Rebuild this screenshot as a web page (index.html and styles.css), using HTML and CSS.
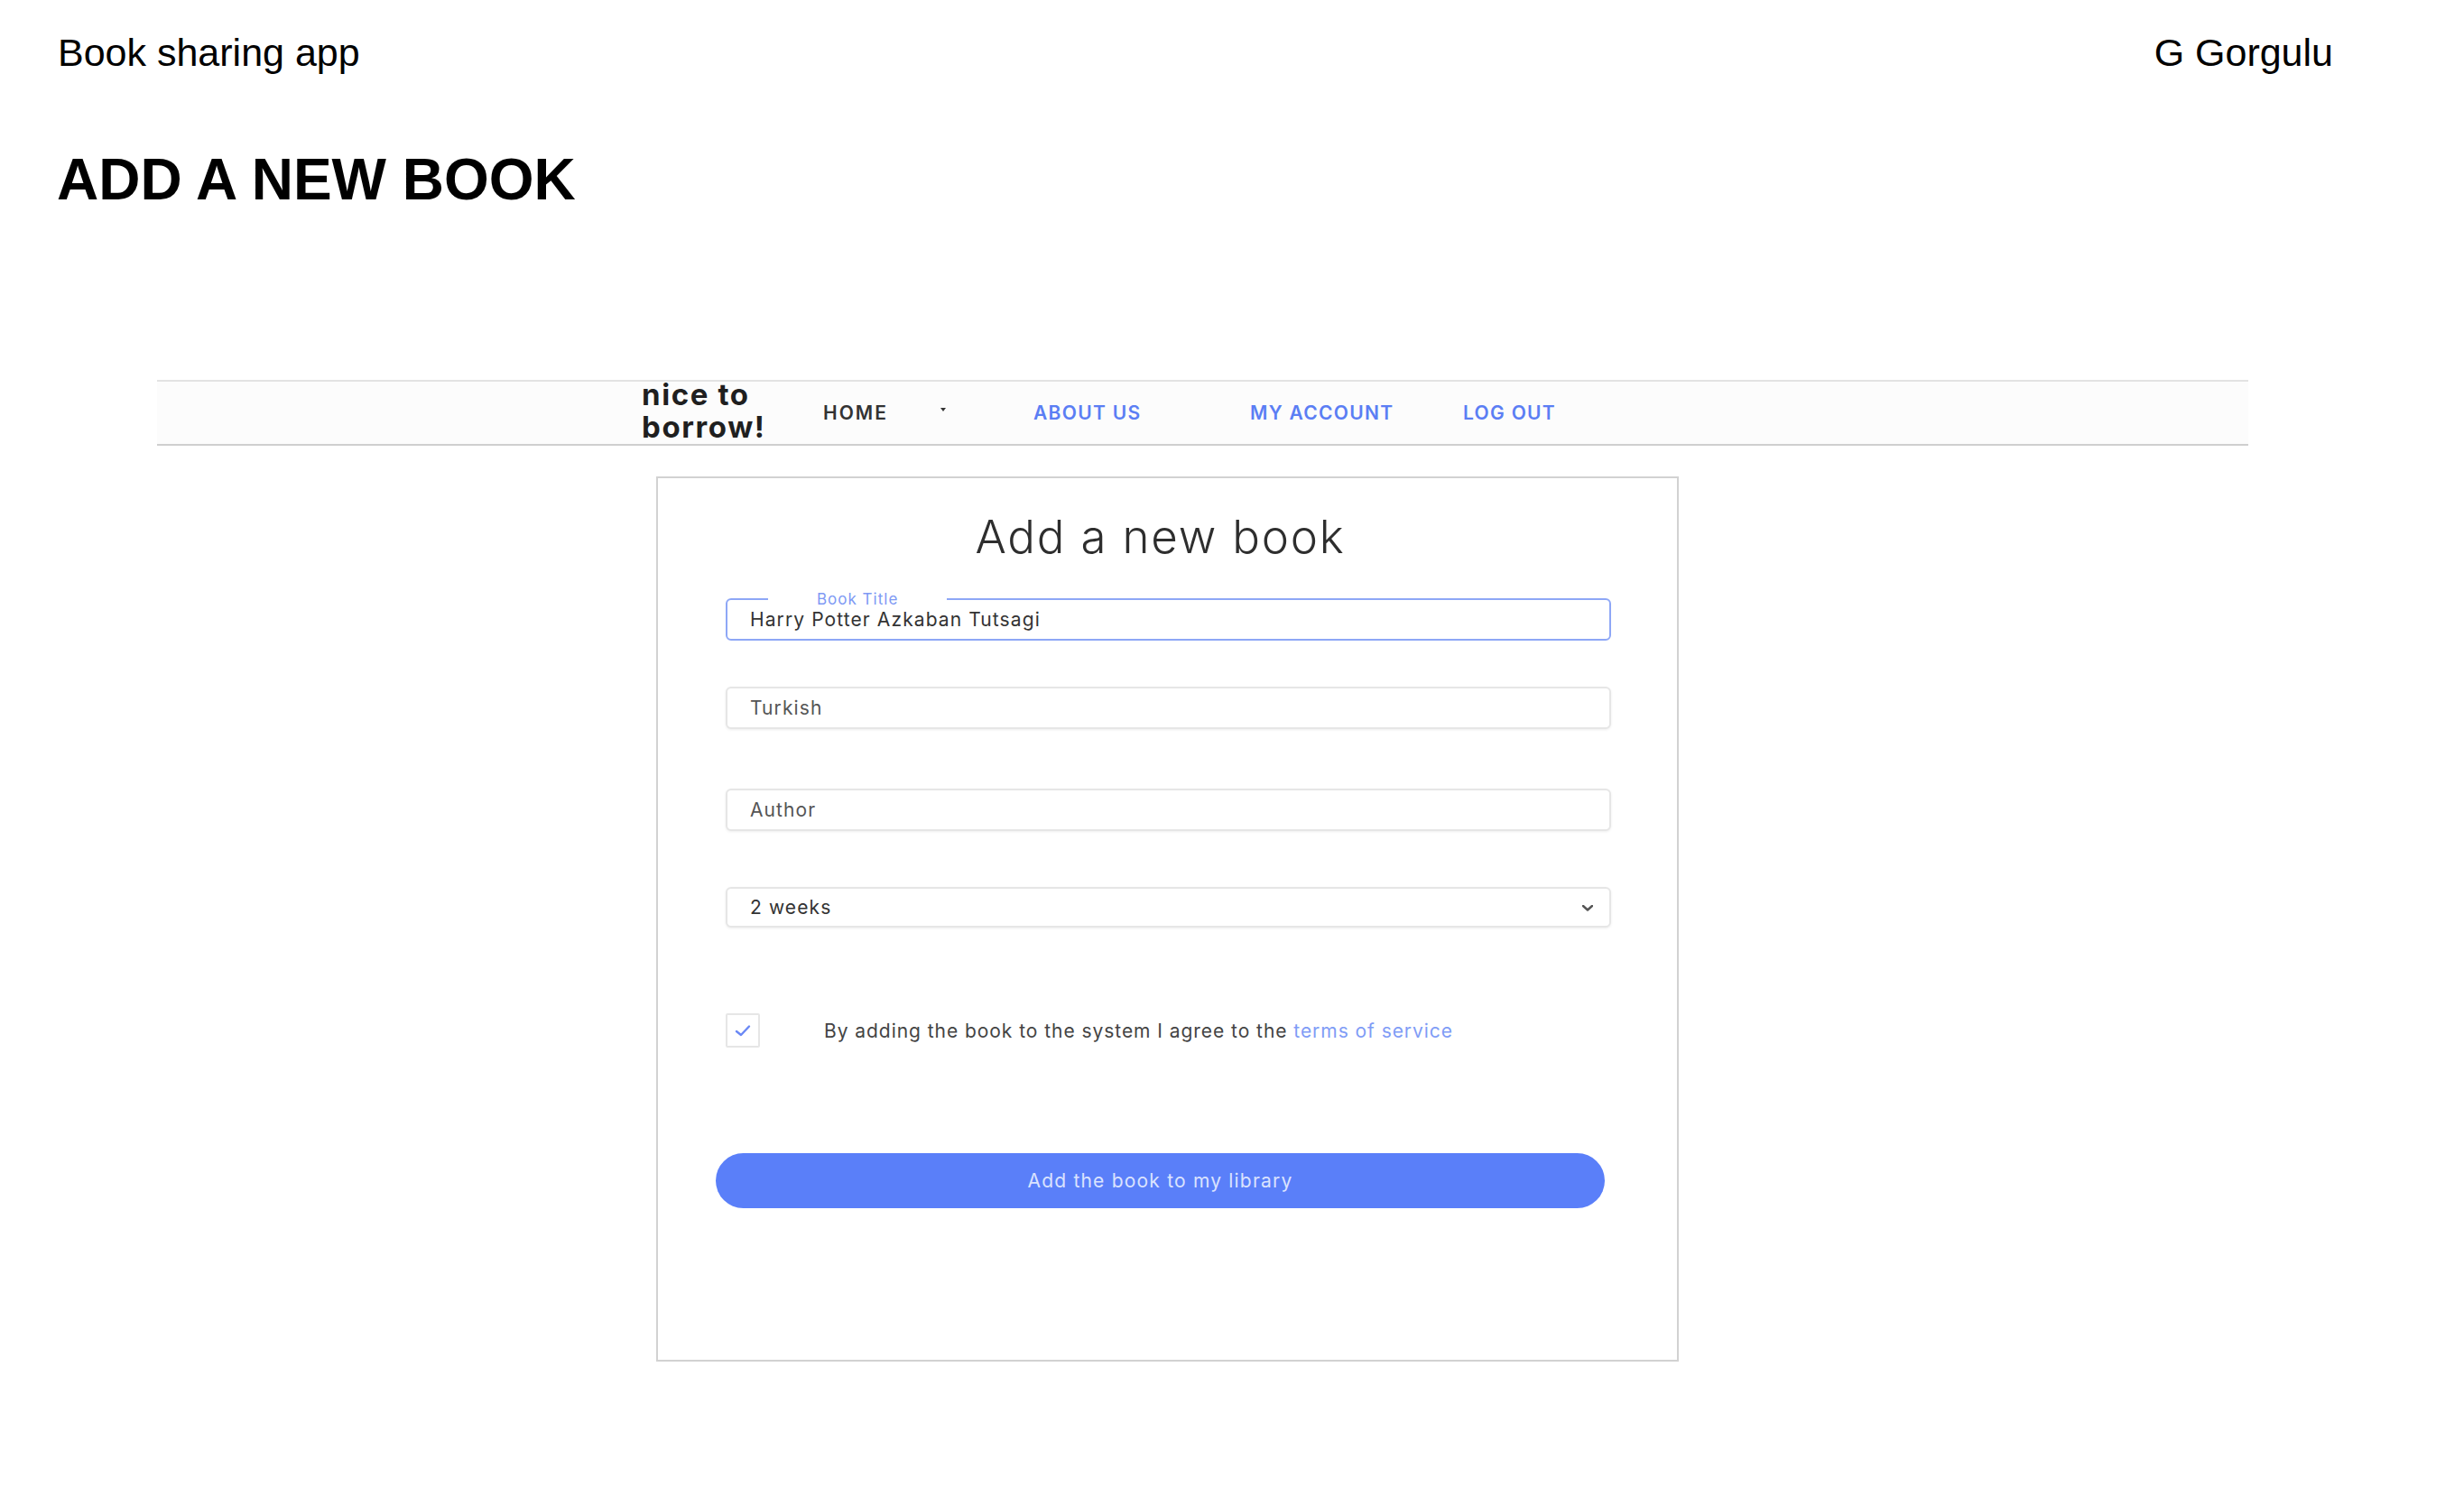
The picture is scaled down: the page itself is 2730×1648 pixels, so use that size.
FILE: index.html
```html
<!DOCTYPE html>
<html lang="en">
<head>
<meta charset="utf-8">
<title>Book sharing app - Add a new book</title>
<link rel="stylesheet" href="styles.css">
</head>
<body>
  <header class="doc-header">
    <span class="doc-app">Book sharing app</span>
    <span class="doc-author">G Gorgulu</span>
  </header>
  <h1 class="doc-title">ADD A NEW BOOK</h1>

  <section class="mock">
    <nav class="navbar">
      <div class="logo">nice to<br>borrow!</div>
      <a class="nav-item nav-home">HOME</a>
      <span class="nav-caret-box"><span class="nav-caret"></span></span>
      <a class="nav-item nav-link nav-about">ABOUT US</a>
      <a class="nav-item nav-link nav-account">MY ACCOUNT</a>
      <a class="nav-item nav-link nav-logout">LOG OUT</a>
    </nav>

    <main class="card">
      <h2 class="card-title">Add a new book</h2>

      <div class="field field-active">
        <span class="field-label">Book Title</span>
        <span class="field-value">Harry Potter Azkaban Tutsagi</span>
      </div>

      <div class="field field-lang">
        <span class="field-value muted">Turkish</span>
      </div>

      <div class="field field-author">
        <span class="field-value muted">Author</span>
      </div>

      <div class="field field-select">
        <span class="field-value">2 weeks</span>
        <svg class="chevron" width="12" height="7" viewBox="0 0 12 7"><polyline points="1,1 6,5.5 11,1" fill="none" stroke="#555" stroke-width="2.4" stroke-linecap="round" stroke-linejoin="round"/></svg>
      </div>

      <div class="agree-row">
        <span class="checkbox">
          <svg width="18" height="14" viewBox="0 0 18 14"><polyline points="2,8 7,12 16,2.5" fill="none" stroke="#6a88f5" stroke-width="2.4" stroke-linecap="round" stroke-linejoin="round"/></svg>
        </span>
        <span class="agree-text">By adding the book to the system I agree to the <a class="terms">terms of service</a></span>
      </div>

      <button class="submit" type="button">Add the book to my library</button>
    </main>
  </section>
</body>
</html>
```

FILE: styles.css
```css
html, body {
  margin: 0;
  padding: 0;
  background: #ffffff;
}

body {
  font-family: "Liberation Sans", Arial, sans-serif;
  color: #000;
}

.doc-header {
  display: flex;
  justify-content: space-between;
  padding: 34px 145px 0 64px;
  font-size: 43px;
  line-height: 48px;
}

.doc-title {
  margin: 80px 0 0 63px;
  font-size: 64px;
  line-height: 74px;
  font-weight: 700;
}

.mock {
  margin: 185px 0 0 174px;
  width: 2317px;
  font-family: Inter, "Noto Sans", sans-serif;
}

.navbar {
  display: flex;
  align-items: center;
  height: 69px;
  padding-left: 537px;
  border-top: 2px solid #e3e3e3;
  border-bottom: 2px solid #cfcfcf;
  background: #fcfcfc;
}

.logo {
  width: 201px;
  flex: none;
  font-size: 33px;
  line-height: 36px;
  font-weight: 700;
  color: #1f1f1f;
  margin-top: -6px;
  letter-spacing: 1.6px;
}

.nav-item {
  flex: none;
  font-size: 21px;
  font-weight: 600;
  letter-spacing: 1.3px;
  text-decoration: none;
}

.nav-home {
  width: 130px;
  color: #333;
  letter-spacing: 2px;
}

.nav-caret-box {
  width: 103px;
  flex: none;
  display: flex;
  align-items: center;
  height: 10px;
  margin-top: -8px;
}

.nav-caret {
  width: 0;
  height: 0;
  border-top: 4px solid #333;
  border-left: 3px solid transparent;
  border-right: 3px solid transparent;
}

.nav-link {
  color: #5b7ef4;
}

.nav-about { width: 240px; }
.nav-account { width: 236px; }

.card {
  box-sizing: border-box;
  width: 1133px;
  height: 981px;
  margin: 34px 0 0 553px;
  padding: 35px 73px 0 75px;
  border: 2px solid #d2d2d2;
  background: #fff;
}

.card-title {
  margin: 0;
  padding-right: 18px;
  text-align: center;
  font-size: 51px;
  line-height: 60px;
  font-weight: 300;
  letter-spacing: 1.8px;
  color: #2e2e2e;
}

.field {
  position: relative;
  box-sizing: border-box;
  display: flex;
  align-items: center;
  height: 47px;
  padding: 0 18px 0 25px;
  border: 2px solid #e6e6e6;
  border-radius: 6px;
  box-shadow: 0 1px 3px rgba(0, 0, 0, 0.07);
  background: #fff;
}

.field-active {
  margin-top: 38px;
  border-color: #8ea7f6;
  box-shadow: none;
}

.field-lang { margin-top: 51px; }
.field-author { margin-top: 66px; }

.field-select {
  margin-top: 62px;
  height: 45px;
  justify-content: space-between;
}

.field-label {
  position: absolute;
  top: -11px;
  left: 45px;
  padding: 0 54px;
  background: #fff;
  font-size: 17px;
  line-height: 20px;
  letter-spacing: 1px;
  color: #7e99f4;
}

.field-value {
  font-size: 21px;
  letter-spacing: 1.1px;
  color: #333;
}

.field-value.muted {
  color: #555;
}

.chevron {
  display: block;
  margin-top: 2px;
}

.agree-row {
  display: flex;
  align-items: center;
  margin-top: 95px;
}

.checkbox {
  box-sizing: border-box;
  flex: none;
  width: 38px;
  height: 38px;
  display: flex;
  align-items: center;
  justify-content: center;
  border: 2px solid #e6e6e6;
  border-radius: 2px;
}

.agree-text {
  margin-left: 71px;
  font-size: 21px;
  letter-spacing: 0.95px;
  color: #444;
}

.terms {
  color: #7f9cf6;
  text-decoration: none;
}

.submit {
  display: block;
  width: 985px;
  height: 61px;
  margin: 117px 0 0 -11px;
  border: none;
  border-radius: 31px;
  background: #5a7ff9;
  color: #dbe3fe;
  font-family: Inter, "Noto Sans", sans-serif;
  font-size: 21px;
  letter-spacing: 1.2px;
  cursor: pointer;
}
```
